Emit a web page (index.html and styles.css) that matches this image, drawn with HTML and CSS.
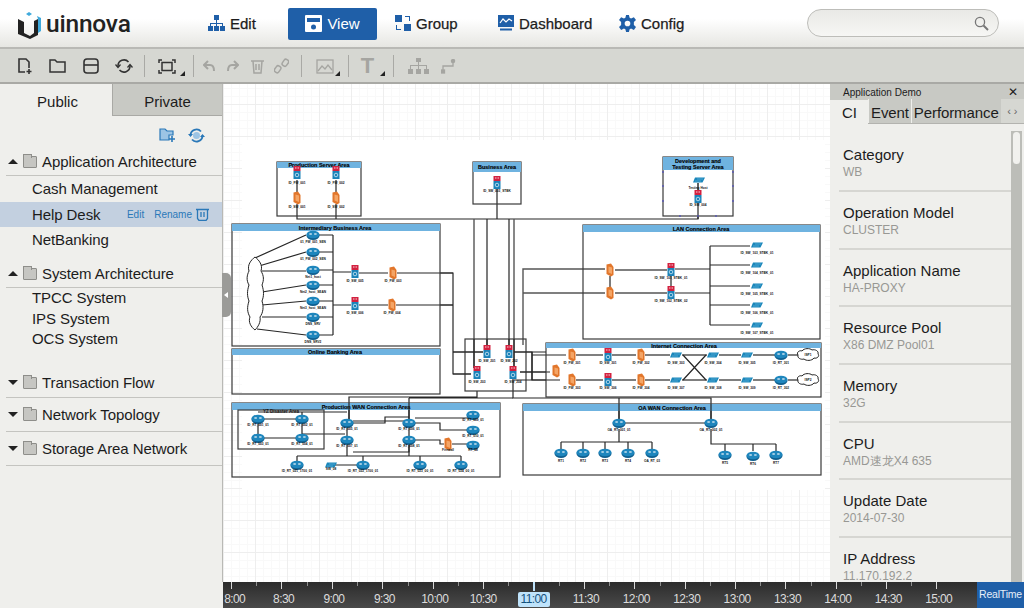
FILE: index.html
```html
<!DOCTYPE html>
<html lang="en">
<head>
    <meta charset="UTF-8">
    <meta name="viewport" content="width=device-width, initial-scale=1.0">
    <title>uinnova - Application Demo</title>
    <link rel="stylesheet" href="styles.css">
</head>
<body>
    <header class="topbar">
        <div class="logo">
            <svg width="26" height="28" viewBox="0 0 26 28">
                <path d="M1 8 L7 11 V22 L13 25 L17 22 V10 L21 8 V24 L13 28 L1 23 Z" fill="#222"/>
                <path d="M9 3 L12 1 L15 3 L12 5 Z" fill="#3fa9dc"/>
                <path d="M20 5 L24 7 V20 L21 22 V8 Z" fill="#3fa9dc"/>
            </svg>
            <span>uinnova</span>
        </div>
        <nav class="nav">
            <a class="nav-item nav-edit">
                <svg width="17" height="16" viewBox="0 0 17 16" fill="#1f5fa8">
                    <rect x="6" y="0" width="5" height="5"/><rect x="0" y="11" width="5" height="5"/><rect x="6" y="11" width="5" height="5"/><rect x="12" y="11" width="5" height="5"/>
                    <path d="M8 5h1v3h6v3h-1V9H9v2H8V9H3v2H2V8h6z"/>
                </svg>
                Edit
            </a>
            <a class="nav-item nav-view active">
                <svg width="17" height="17" viewBox="0 0 17 17">
                    <rect width="17" height="17" rx="1" fill="#fff"/>
                    <rect x="2" y="3" width="13" height="4" fill="#1f5fa8"/>
                    <circle cx="8.5" cy="12" r="2.5" fill="#1f5fa8"/>
                </svg>
                View
            </a>
            <a class="nav-item nav-group">
                <svg width="16" height="16" viewBox="0 0 16 16" fill="#1f5fa8">
                    <rect x="0" y="0" width="7" height="7"/><rect x="9" y="9" width="7" height="7"/>
                    <path d="M10 1h5v5h-1V2h-4zM1 10h1v4h4v1H1z"/>
                </svg>
                Group
            </a>
            <a class="nav-item nav-dash">
                <svg width="16" height="16" viewBox="0 0 16 16">
                    <rect width="16" height="12" fill="#1f5fa8"/>
                    <path d="M2 8 L5 4 L8 7 L11 4 L14 6" fill="none" stroke="#fff" stroke-width="1.2"/>
                    <rect x="2" y="13.5" width="12" height="2" fill="#1f5fa8"/>
                </svg>
                Dashboard
            </a>
            <a class="nav-item nav-config">
                <svg width="17" height="17" viewBox="0 0 24 24" fill="#1f5fa8">
                    <path fill-rule="evenodd" d="M10 0h4l1 4 2 1 4-2 3 4-3 3v4l3 3-3 4-4-2-2 1-1 4h-4l-1-4-2-1-4 2-3-4 3-3v-4L0 7l3-4 4 2 2-1zM12 8a4 4 0 1 0 0 8 4 4 0 0 0 0-8z"/>
                </svg>
                Config
            </a>
        </nav>
        <div class="search">
            <svg width="15" height="15" viewBox="0 0 15 15" fill="none" stroke="#777" stroke-width="1.3">
                <circle cx="6" cy="6" r="4.6"/><path d="M9.5 9.5L14 14" stroke-width="2"/>
            </svg>
        </div>
    </header>

    <div class="toolbar">
        <div class="tb-group tb-file">
            <span class="tb-btn"><svg width="16" height="17" viewBox="0 0 16 17" fill="none" stroke="#333" stroke-width="1.6"><path d="M8 14H2V1h7l3 3v6"/><path d="M12 11v5M9.5 13.5h5"/></svg></span>
            <span class="tb-btn"><svg width="17" height="14" viewBox="0 0 17 14" fill="none" stroke="#333" stroke-width="1.5"><path d="M1 1h5l2 2h8v10H1z"/></svg></span>
            <span class="tb-btn"><svg width="16" height="16" viewBox="0 0 16 16" fill="none" stroke="#333" stroke-width="1.6"><rect x="1" y="1" width="14" height="14" rx="3"/><path d="M1 7h14"/></svg></span>
            <span class="tb-btn"><svg width="18" height="16" viewBox="0 0 18 16" fill="none" stroke="#333" stroke-width="1.6"><path d="M3 8a6 6 0 0 1 10.5-4M15 8a6 6 0 0 1-10.5 4"/><path d="M0.5 6.500l2.500 3 2.500-3M12.500 9.500l2.500-3 2.500 3" stroke-width="1.300"/></svg></span>
        </div>
        <i class="tb-sep"></i>
        <div class="tb-group tb-fit">
            <span class="tb-btn tb-more"><svg width="18" height="15" viewBox="0 0 18 15" fill="none" stroke="#333" stroke-width="1.500"><rect x="4" y="3.500" width="10" height="8"/><path d="M1 4V1h3M14 1h3v3M17 11v3h-3M4 14H1v-3"/></svg></span>
        </div>
        <i class="tb-sep"></i>
        <div class="tb-group tb-edit">
            <span class="tb-btn"><svg width="12" height="12" viewBox="0 0 12 12" fill="none" stroke="#a5a5a1" stroke-width="2"><path d="M5 1L1 5l4 4M1 5h6c3 0 4 2 4 6"/></svg></span>
            <span class="tb-btn"><svg width="12" height="12" viewBox="0 0 12 12" fill="none" stroke="#a5a5a1" stroke-width="2"><path d="M7 1l4 4-4 4M11 5H5C2 5 1 7 1 11"/></svg></span>
            <span class="tb-btn"><svg width="13" height="15" viewBox="0 0 13 15" fill="none" stroke="#a5a5a1" stroke-width="1.500"><path d="M0 2h13M2 2l1 12h7l1-12M5 5v6M8 5v6"/></svg></span>
            <span class="tb-btn"><svg width="15" height="16" viewBox="0 0 15 16" fill="none" stroke="#a5a5a1" stroke-width="1.500"><rect x="-2.500" y="-2" width="5" height="7" rx="2" transform="translate(4.500 10) rotate(35)"/><rect x="-2.500" y="-5" width="5" height="7" rx="2" transform="translate(10.500 6) rotate(35)"/></svg></span>
        </div>
        <i class="tb-sep"></i>
        <div class="tb-group tb-image">
            <span class="tb-btn tb-more"><svg width="18" height="15" viewBox="0 0 18 15" fill="none" stroke="#a5a5a1" stroke-width="1.300"><rect x="1" y="1" width="16" height="13"/><path d="M2 12l4-5 3 3 3-4 4 5"/></svg></span>
        </div>
        <i class="tb-sep"></i>
        <div class="tb-group tb-text">
            <span class="tb-btn tb-more tb-t">T</span>
        </div>
        <i class="tb-sep"></i>
        <div class="tb-group tb-tree">
            <span class="tb-btn"><svg width="21" height="16" viewBox="0 0 21 16" fill="#a5a5a1"><rect x="8" y="0" width="5" height="4"/><rect x="0" y="11" width="5" height="5"/><rect x="8" y="11" width="5" height="5"/><rect x="16" y="11" width="5" height="5"/><path d="M10 4h1v3h8v4h-1V8h-7v3h-1V8H3v3H2V7h8z"/></svg></span>
            <span class="tb-btn"><svg width="15" height="15" viewBox="0 0 15 15" fill="none" stroke="#a5a5a1" stroke-width="1.300"><path d="M2 11V7h10V3"/><rect x="0.500" y="11" width="3" height="3" fill="#a5a5a1"/><circle cx="12" cy="2" r="1.600" fill="#a5a5a1"/></svg></span>
        </div>
    </div>

    <main class="main">
        <aside class="sidebar">
            <div class="tabs">
                <div class="tab active">Public</div>
                <div class="tab">Private</div>
            </div>
            <div class="side-tools">
                <svg width="17" height="14" viewBox="0 0 17 14" fill="#9cc4e4" stroke="#2a78b8" stroke-width="1.200"><path d="M1 1h5l2 2h6v4H10v5H1z"/><path d="M13 8v6M10 11h6" fill="none" stroke-width="1.600"/></svg>
                <svg width="17" height="15" viewBox="0 0 17 15" fill="none" stroke="#2a78b8" stroke-width="1.800"><path d="M2.500 7.500a6 6 0 0 1 10.500-4M14.500 7.500a6 6 0 0 1-10.500 4"/><circle cx="8.500" cy="7.500" r="3.500" fill="#9cc4e4" stroke="none"/><path d="M0 6h5L2.500 9zM12 9h5l-2.500-3z" fill="#2a78b8" stroke="none"/></svg>
            </div>

            <div class="tree-head open">
                <i class="caret"></i><i class="folder"></i>Application Architecture
            </div>
            <div class="tree-list">
                <div class="tree-item">Cash Management</div>
                <div class="tree-item selected">
                    Help Desk
                    <span class="item-actions">
                        <a>Edit</a><a>Rename</a>
                        <svg width="13" height="13" viewBox="0 0 13 13" fill="none" stroke="#2a78b8" stroke-width="1.300"><path d="M0 1.500h13M1.500 1.500v9l1.500 2h7l1.500-2v-9M5 4v5M8 4v5"/></svg>
                    </span>
                </div>
                <div class="tree-item">NetBanking</div>
            </div>

            <div class="tree-head open head-system">
                <i class="caret"></i><i class="folder"></i>System Architecture
            </div>
            <div class="tree-list compact">
                <div class="tree-item">TPCC System</div>
                <div class="tree-item">IPS System</div>
                <div class="tree-item">OCS System</div>
            </div>

            <div class="tree-head head-closed head-first">
                <i class="caret"></i><i class="folder"></i>Transaction Flow
            </div>
            <div class="tree-head head-closed">
                <i class="caret"></i><i class="folder"></i>Network Topology
            </div>
            <div class="tree-head head-closed">
                <i class="caret"></i><i class="folder"></i>Storage Area Network
            </div>
        </aside>

        <section class="center">
            <div class="canvas">
                <div class="collapse-handle"></div>
                <svg class="diagram" viewBox="223 84 607 498" width="607" height="498">
                    <defs>
                        <g id="router">
                            <ellipse cx="0" cy="0.800" rx="6.500" ry="4.200" fill="#0f5f8f"/>
                            <ellipse cx="0" cy="-0.500" rx="6.500" ry="3.800" fill="#1e86bd"/>
                            <path d="M-4-1h2.500M-1.500-1l-1-1M-1.500-1l-1 1M4-1H1.500M1.500-1l1-1M1.500-1l1 1" stroke="#fff" stroke-width=".7" fill="none"/>
                        </g>
                        <g id="server">
                            <rect x="-3.500" y="-7" width="7" height="5" fill="#d3213f"/>
                            <rect x="-3.500" y="-2" width="7" height="8" fill="#1b82b8"/>
                            <circle cx="0" cy="2" r="1.800" fill="none" stroke="#cfe8f5" stroke-width=".8"/>
                            <path d="M-2-5h1.500M.5-5H2" stroke="#fff" stroke-width=".8"/>
                        </g>
                        <g id="firewall">
                            <path d="M-3.500-5.500L1-6.500L3.500-3V5L1 6.500L-3.500 4Z" fill="#e2762b"/>
                            <path d="M-1.500-3.500L2-2.500V4L-1.500 2.500Z" fill="#f4a566"/>
                        </g>
                        <g id="switch">
                            <path d="M-4-2.500H6L3.500 2.500H-6Z" fill="#1b87bb"/>
                            <path d="M-2-1H4M-4 1H2" stroke="#7cc6e8" stroke-width=".5"/>
                        </g>
                        <g id="cloud">
                            <path d="M-10 0c-2-3 2-5 4-4 2-3 8-3 10-1 3-1 7 1 6 4 2 2-1 5-4 4-2 3-8 3-10 1-3 1-7-1-6-4z" fill="#fff" stroke="#222" stroke-width="1"/>
                        </g>
                    </defs>

                    <rect class="paper" x="242" y="140" width="583" height="350"/>

                    <!-- links -->
                    <g class="links">
                        <path d="M297 216V219H698V216M336 216V219M497 204V219"/>
                        <path class="soft" d="M474 219V368M514 219V368"/>
                        <path d="M487 219V346M509 219V346"/>
                        <path d="M297 180V192M336 180V192M297 204V216M336 204V216M497 188V204M698 183V216"/>
                        <path d="M440 273H453V374H471M440 305H453M453 352H483"/>
                        <path d="M359 273H388M397 273H453M359 305H388M396 305H453M333 272H351M333 305H351"/>
                        <path d="M333 235V335M313 235H333M313 252H333M313 270H333M313 285H333M313 301H333M313 317H333M313 335H333"/>
                        <path d="M255 258L306 235M259 266L306 252M262 271H306M262 292L306 285M262 305L306 301M262 317H306M257 329L306 335"/>
                        <path class="soft" d="M523 345V269H605M523 293H605M615 270H667M615 293H667"/>
                        <path d="M610 276V287M671 276V287"/>
                        <path d="M675 269H710M675 293H710M710 246V325M710 246H750M710 265H750M710 286H750M710 305H750M710 325H750"/>
                        <path d="M514 352H532V380H560M532 355H566M520 372H550"/>
                        <path class="soft" d="M576 355H603M612 355H636M645 355H670M682 355H707M719 355H741M753 355H775M788 355H800"/>
                        <path class="soft" d="M576 380H603M612 380H636M645 380H670M682 380H707M719 380H741M753 380H775M788 380H800"/>
                        <path d="M683 355L706 380M683 380L706 355"/>
                        <path d="M513 379V398H711V423M619 398V423M619 423H711"/>
                        <path d="M619 429V442M561 442H652M561 442V449M583 442V449M605 442V449M628 442V449M652 442V449"/>
                        <path d="M711 429V444H776M725 444V451M753 444V451M776 444V451"/>
                        <path d="M477 391V397H349V423M409 398H513M409 398V423"/>
                        <path d="M258 419V438M302 419V438M258 438H302M258 412H347M302 412V419M347 428V440M409 428V440"/>
                        <path d="M258 419H302M302 434H345M353 423H385V417H409M353 421H409M415 423H440V430H473M415 418H473"/>
                        <path d="M415 440H440V444H444M452 444H473M353 452H409V445"/>
                        <path d="M297 456H461M297 456V461M363 456V461M420 456V461M461 456V461M347 445V456M409 445V456M331 465H357"/>
                    </g>
                    <path class="link-thin" d="M698 183V197"/>

                    <!-- areas -->
                    <g class="area"><rect x="277" y="162" width="84" height="54"/><rect class="bar" x="277" y="162" width="84" height="6"/><text x="319" y="167">Production Server Area</text></g>
                    <g class="area"><rect x="473" y="162" width="48" height="42"/><rect class="bar" x="473" y="162" width="48" height="10"/><text x="497" y="168.500">Business Area</text></g>
                    <g class="area"><rect x="663" y="157" width="70" height="59"/><rect class="bar" x="663" y="157" width="70" height="13"/><text x="698" y="163">Development and</text><text x="698" y="168.500">Testing Server Area</text></g>
                    <g class="area"><rect x="232" y="224" width="208" height="122"/><rect class="bar" x="232" y="224" width="208" height="7"/><text x="335" y="229.500">Intermediary Business Area</text></g>
                    <g class="area"><rect x="583" y="225" width="237" height="114"/><rect class="bar" x="583" y="225" width="237" height="7"/><text x="701" y="230.500">LAN Connection Area</text></g>
                    <g class="area"><rect x="232" y="349" width="208" height="45"/><rect class="bar" x="232" y="349" width="208" height="6"/><text x="335" y="354">Online Banking Area</text></g>
                    <g class="area"><rect x="232" y="403" width="268" height="74"/><rect class="bar" x="232" y="403" width="268" height="7"/><text x="366" y="408.500">Production WAN Connection Area</text></g>
                    <g class="area"><rect x="546" y="343" width="275" height="54"/><rect class="bar" x="546" y="343" width="275" height="5"/><text x="684" y="347.500">Internet Connection Area</text></g>
                    <g class="area"><rect x="523" y="404" width="298" height="71"/><rect class="bar" x="523" y="404" width="298" height="7"/><text x="672" y="409.500">OA WAN Connection Area</text></g>
                    <rect class="box" x="465" y="339" width="61" height="52"/>
                    <rect class="box" x="238" y="410" width="86" height="39"/>
                    <text class="sub-title" x="281" y="413">YZ Disaster Area</text>

                    <!-- overlay the links that cross the area borders -->
                    <path class="links" d="M474 339V368M487 339V346M509 339V346M514 339V368M453 352H483M453 374H471M514 352H546M520 372H546M514 380H546M532 352V380"/>
                    <path class="links" d="M349 403V423M409 403V423M619 404V423M711 404V423M698 216V219"/>

                    <!-- production servers -->
                    <use href="#server" x="297" y="173"/><use href="#server" x="336" y="173"/><use href="#server" x="497" y="183"/>
                    <use href="#firewall" x="297" y="198"/><use href="#firewall" x="336" y="198"/>
                    <use href="#switch" x="699" y="180"/><use href="#server" x="698" y="197"/>

                    <!-- intermediary -->
                    <path class="cloud-tall" d="M255 257c4 3 8 8 6 14 3 5 3 9 1 14 2 6 2 11 0 16 2 6 1 12-2 16 1 5-2 10-5 13-4-3-7-8-5-13-3-5-3-10-1-16-2-5-2-10 0-16-3-5-2-10 0-14-2-6 2-11 6-14z"/>
                    <use href="#router" x="313" y="235"/><use href="#router" x="313" y="252"/><use href="#router" x="313" y="270"/><use href="#router" x="313" y="285"/><use href="#router" x="313" y="301"/><use href="#router" x="313" y="317"/><use href="#router" x="313" y="335"/>
                    <use href="#server" x="355" y="272"/><use href="#server" x="355" y="304"/>
                    <use href="#firewall" x="393" y="273"/><use href="#firewall" x="392" y="305"/>

                    <!-- lan -->
                    <use href="#firewall" x="610" y="270"/><use href="#firewall" x="610" y="293"/>
                    <use href="#server" x="671" y="270"/><use href="#server" x="671" y="293"/>
                    <use href="#switch" x="757" y="245"/><use href="#switch" x="757" y="265"/><use href="#switch" x="757" y="286"/><use href="#switch" x="757" y="305"/><use href="#switch" x="757" y="325"/>

                    <!-- core -->
                    <use href="#server" x="487" y="352"/><use href="#server" x="509" y="352"/><use href="#server" x="477" y="373"/><use href="#server" x="513" y="373"/>

                    <!-- internet -->
                    <use href="#firewall" x="572" y="355"/><use href="#server" x="608" y="355"/><use href="#firewall" x="641" y="355"/><use href="#switch" x="676" y="355"/><use href="#switch" x="713" y="355"/><use href="#switch" x="747" y="355"/><use href="#router" x="781" y="355"/><use href="#cloud" x="808" y="355"/>
                    <use href="#firewall" x="572" y="380"/><use href="#server" x="608" y="380"/><use href="#firewall" x="641" y="380"/><use href="#switch" x="676" y="380"/><use href="#switch" x="713" y="380"/><use href="#switch" x="747" y="380"/><use href="#router" x="781" y="380"/><use href="#cloud" x="808" y="380"/>
                    <use href="#firewall" x="556" y="371"/>

                    <!-- oa wan -->
                    <use href="#router" x="619" y="423"/><use href="#router" x="711" y="423"/>
                    <use href="#router" x="561" y="453"/><use href="#router" x="583" y="453"/><use href="#router" x="605" y="453"/><use href="#router" x="628" y="453"/><use href="#router" x="652" y="453"/>
                    <use href="#router" x="725" y="455"/><use href="#router" x="753" y="456"/><use href="#router" x="776" y="455"/>

                    <!-- production wan -->
                    <use href="#router" x="258" y="419"/><use href="#router" x="302" y="419"/><use href="#router" x="258" y="438"/><use href="#router" x="302" y="438"/>
                    <use href="#router" x="347" y="423"/><use href="#router" x="409" y="423"/><use href="#router" x="347" y="440"/><use href="#router" x="409" y="440"/>
                    <use href="#router" x="473" y="415"/><use href="#router" x="473" y="430"/><use href="#router" x="473" y="445"/>
                    <use href="#firewall" x="448" y="444"/>
                    <use href="#router" x="297" y="465"/><use href="#router" x="363" y="465"/><use href="#router" x="420" y="465"/><use href="#router" x="461" y="465"/>
                    <use href="#switch" x="331" y="465"/>

                    <!-- selection handles -->
                    <g class="handles">
                        <circle cx="663" cy="172" r="1"/><circle cx="663" cy="186" r="1"/><circle cx="663" cy="201" r="1"/>
                        <circle cx="733" cy="172" r="1"/><circle cx="733" cy="186" r="1"/><circle cx="733" cy="201" r="1"/>
                        <circle cx="680" cy="216" r="1"/><circle cx="698" cy="216" r="1"/><circle cx="716" cy="216" r="1"/>
                    </g>

                    <!-- node labels -->
                    <g class="labels">
                        <text x="297" y="184">ID_FW_001</text><text x="336" y="184">ID_FW_002</text>
                        <text x="297" y="208">ID_SW_001</text><text x="336" y="208">ID_SW_002</text>
                        <text x="497" y="192">ID_SW_003_STBK</text>
                        <text x="698" y="189">Testing Host</text><text x="698" y="206">ID_SW_004</text>
                        <text x="313" y="243">01_FW_001_SEN</text><text x="313" y="260">01_FW_002_SEN</text><text x="313" y="278">Net1_host</text><text x="313" y="293">Net2_host_SEAN</text><text x="313" y="309">Net3_host_SEAN</text><text x="313" y="325">DNS_SRV</text><text x="313" y="343">DNS_SRV2</text>
                        <text x="355" y="282">ID_SW_005</text><text x="355" y="314">ID_SW_006</text>
                        <text x="393" y="282">ID_FW_003</text><text x="392" y="314">ID_FW_004</text>
                        <text x="671" y="279">ID_SW_101_STBK_01</text><text x="671" y="302">ID_SW_102_STBK_02</text>
                        <text x="757" y="254">ID_SW_103_STBK_01</text><text x="757" y="274">ID_SW_104_STBK_01</text><text x="757" y="295">ID_SW_105_STBK_01</text><text x="757" y="314">ID_SW_106_STBK_01</text><text x="757" y="334">ID_SW_107_STBK_01</text>
                        <text x="487" y="362">ID_SW_201</text><text x="509" y="362">ID_SW_202</text><text x="477" y="383">ID_SW_203</text><text x="513" y="383">ID_SW_204</text>
                        <text x="572" y="364">ID_FW_301</text><text x="608" y="364">ID_SW_301</text><text x="641" y="364">ID_FW_302</text><text x="676" y="364">ID_SW_303</text><text x="713" y="364">ID_SW_304</text><text x="747" y="364">ID_SW_305</text><text x="781" y="364">ID_RT_301</text>
                        <text x="572" y="389">ID_FW_303</text><text x="608" y="389">ID_SW_306</text><text x="641" y="389">ID_FW_304</text><text x="676" y="389">ID_SW_307</text><text x="713" y="389">ID_SW_308</text><text x="747" y="389">ID_SW_309</text><text x="781" y="389">ID_RT_302</text>
                        <text x="808" y="356">ISP1</text><text x="808" y="381">ISP2</text>
                        <text x="619" y="431">OA_RT_001_01</text><text x="711" y="431">OA_RT_002_01</text>
                        <text x="561" y="462">RT1</text><text x="583" y="462">RT2</text><text x="605" y="462">RT3</text><text x="628" y="462">RT4</text><text x="652" y="462">OA_RT_03</text>
                        <text x="725" y="464">RT5</text><text x="753" y="465">RT6</text><text x="776" y="464">RT7</text>
                        <text x="258" y="426">ID_RT_001_01</text><text x="302" y="426">ID_RT_002_01</text><text x="258" y="445">ID_RT_003_01</text><text x="302" y="445">ID_RT_004_01</text>
                        <text x="347" y="430">ID_RT_005_01</text><text x="409" y="430">ID_RT_006_01</text><text x="347" y="447">ID_RT_007_01</text><text x="409" y="447">ID_RT_008_01</text>
                        <text x="473" y="421">ID_RT_009_01</text><text x="473" y="437">ID_RT_010_01</text><text x="473" y="451">RT_08</text><text x="448" y="451">Firewall</text>
                        <text x="297" y="472">ID_RT_021_1700_01</text><text x="331" y="470">SW_08</text><text x="363" y="472">ID_RT_022_1700_01</text><text x="420" y="472">ID_RT_023_00_01</text><text x="461" y="472">ID_RT_024_00_01</text>
                    </g>
                </svg>
            </div>
        </section>

        <aside class="details">
            <div class="details-head">Application Demo<span class="details-close">&#10005;</span></div>
            <div class="details-tabs">
                <div class="dtab active">CI</div>
                <div class="dtab">Event</div>
                <div class="dtab">Performance</div>
                <div class="dtab-arrows">&#8249; &#8250;</div>
            </div>
            <div class="details-body">
                <div class="props">
                    <div class="prop"><b>Category</b><span>WB</span></div>
                    <div class="prop"><b>Operation Model</b><span>CLUSTER</span></div>
                    <div class="prop"><b>Application Name</b><span>HA-PROXY</span></div>
                    <div class="prop"><b>Resource Pool</b><span>X86 DMZ Pool01</span></div>
                    <div class="prop"><b>Memory</b><span>32G</span></div>
                    <div class="prop"><b>CPU</b><span>AMD速龙X4 635</span></div>
                    <div class="prop"><b>Update Date</b><span>2014-07-30</span></div>
                    <div class="prop"><b>IP Address</b><span>11.170.192.2</span></div>
                </div>
                <div class="scroll"><div class="scroll-thumb"></div></div>
            </div>
        </aside>
    </main>

    <footer class="timeline">
        <div class="hours">
            <div class="hour first">8:00</div>
            <div class="hour">8:30</div>
            <div class="hour">9:00</div>
            <div class="hour">9:30</div>
            <div class="hour">10:00</div>
            <div class="hour tight">10:30</div>
            <div class="hour tight current"><span>11:00</span></div>
            <div class="hour">11:30</div>
            <div class="hour">12:00</div>
            <div class="hour">12:30</div>
            <div class="hour">13:00</div>
            <div class="hour">13:30</div>
            <div class="hour">14:00</div>
            <div class="hour">14:30</div>
            <div class="hour">15:00</div>
        </div>
        <div class="realtime">RealTime</div>
    </footer>
</body>
</html>
```

FILE: styles.css
```css
/* Reset some default styles */
* {
    margin: 0;
    padding: 0;
    box-sizing: border-box;
}

html, body {
    width: 1024px;
    height: 608px;
    overflow: hidden;
}

body {
    font-family: "Liberation Sans", Arial, sans-serif;
    color: #1c1c1c;
    background-color: #efefec;
    display: flex;
    flex-direction: column;
}

svg {
    flex: none;
}

/* top bar */
.topbar {
    height: 49px;
    display: flex;
    align-items: center;
    background: linear-gradient(#ffffff 40%, #e6e6e2);
    border-bottom: 2px solid #b9b9b5;
}

.logo {
    width: 208px;
    padding-left: 17px;
    display: flex;
    align-items: center;
    gap: 3px;
}

.logo svg {
    margin-top: 2px;
}

.logo span {
    font-family: Roboto, sans-serif;
    font-size: 24.500px;
    font-weight: 500;
    letter-spacing: -0.2px;
    color: #222;
}

.nav {
    display: flex;
    align-items: center;
}

.nav-item {
    display: flex;
    align-items: center;
    gap: 5px;
    height: 32px;
    padding-bottom: 1px;
    font-size: 15px;
    -webkit-text-stroke: 0.25px #1c1c1c;
}

.nav-item.active {
    justify-content: center;
    background-color: #1f5fa8;
    border-radius: 2px;
    color: #fff;
    -webkit-text-stroke: 0;
}

.nav-edit { width: 80px; }
.nav-view { width: 89px; margin-right: 18px; }
.nav-group { width: 103px; }
.nav-dash { width: 121px; }
.nav-config { width: 68px; }

.search {
    width: 192px;
    height: 28px;
    margin: -1px 25px 0 auto;
    border: 1px solid #bdbdb9;
    border-radius: 14px;
    background: linear-gradient(#e9e9e6, #f6f6f4);
    display: flex;
    align-items: center;
    justify-content: flex-end;
    padding-right: 9px;
}

/* tool bar */
.toolbar {
    height: 35px;
    padding-top: 1px;
    display: flex;
    align-items: center;
    background-color: #d6d7d2;
    border-bottom: 2px solid #a9a9a5;
}

.tb-group {
    display: flex;
    align-items: center;
}

.tb-btn {
    position: relative;
    display: flex;
    align-items: center;
    justify-content: center;
    height: 24px;
}

.tb-more::after {
    content: "";
    position: absolute;
    right: 1px;
    bottom: 2px;
    border-left: 5px solid transparent;
    border-bottom: 5px solid #222;
}

.tb-sep {
    width: 1px;
    height: 22px;
    background-color: #a9a9a5;
}

.tb-file { padding: 0 4px 0 8px; }
.tb-file .tb-btn { width: 33px; }
.tb-fit { padding: 0 7px 0 3px; }
.tb-fit .tb-btn { width: 38px; }
.tb-edit { padding: 0 8px 0 3px; }
.tb-edit .tb-btn { width: 24px; }
.tb-image { padding: 0 7px 0 6px; }
.tb-image .tb-btn { width: 33px; }
.tb-text { padding: 0 7px 0 6px; }
.tb-text .tb-btn { width: 31px; }
.tb-tree { padding-left: 9px; }
.tb-tree .tb-btn { width: 30px; }

.tb-t {
    font-size: 22px;
    font-weight: bold;
    color: #a5a5a1;
    padding-right: 6px;
}

/* main area */
.main {
    flex: 1;
    min-height: 0;
    display: flex;
}

.sidebar {
    width: 223px;
    background-color: #efefec;
    border-right: 1px solid #b9b9b5;
}

.tabs {
    display: flex;
    height: 32px;
}

.tab {
    flex: 1;
    text-align: center;
    font-size: 15px;
    line-height: 36px;
    background-color: #c8c9c4;
    border-bottom: 1px solid #a9a9a5;
    border-left: 1px solid #a9a9a5;
}

.tab.active {
    background-color: #efefec;
    border: none;
    padding-left: 3px;
}

.side-tools {
    height: 32px;
    display: flex;
    align-items: center;
    justify-content: flex-end;
    gap: 12px;
    padding: 6px 17px 0 0;
}

.tree-head {
    display: flex;
    align-items: center;
    height: 28px;
    margin-left: 6px;
    padding-left: 2px;
    font-size: 15px;
    letter-spacing: -0.08px;
    border-bottom: 1px solid #c4c4c0;
}

.caret {
    width: 0;
    height: 0;
    border-left: 5px solid transparent;
    border-right: 5px solid transparent;
    border-top: 5px solid #222;
    margin-right: 5px;
}

.tree-head.open .caret {
    border-top: none;
    border-bottom: 5px solid #222;
}

.folder {
    position: relative;
    width: 14px;
    height: 12px;
    margin: 1px 5px 0 0;
    background-color: #c6c6c2;
    border: 1px solid #8e8e8a;
    border-radius: 1px;
}

.folder::before {
    content: "";
    position: absolute;
    top: -3px;
    left: -1px;
    width: 7px;
    height: 3px;
    background-color: #c6c6c2;
    border: 1px solid #8e8e8a;
    border-bottom: none;
}

.tree-item {
    display: flex;
    align-items: center;
    height: 25.500px;
    padding-left: 32px;
    font-size: 15px;
    letter-spacing: -0.08px;
}

.tree-item.selected {
    background-color: #c3d0e0;
    justify-content: space-between;
    padding-right: 13px;
}

.item-actions {
    display: flex;
    align-items: center;
    gap: 10px;
    font-size: 10px;
    letter-spacing: 0;
    color: #2a78b8;
}

.item-actions svg {
    margin-left: -6px;
}

.head-system {
    margin-top: 7px;
}

.compact .tree-item {
    height: 20.400px;
}

.head-first {
    margin-top: 20px;
}

.head-closed {
    height: 34px;
}

.head-first.head-closed {
    height: 29px;
}

/* canvas */
.center {
    width: 607px;
    position: relative;
}

.canvas {
    height: 100%;
    background-color: #fff;
    background-image:
        linear-gradient(#eeeeee 1px, transparent 1px),
        linear-gradient(90deg, #eeeeee 1px, transparent 1px),
        linear-gradient(#f9f9f9 1px, transparent 1px),
        linear-gradient(90deg, #f9f9f9 1px, transparent 1px);
    background-size: 32px 32px, 32px 32px, 8px 8px, 8px 8px;
    background-position: -1px -12px, 0 -12px, 0 -4px, 0 0;
}

.collapse-handle {
    position: absolute;
    left: -1px;
    top: 189px;
    width: 9px;
    height: 44px;
    background-color: #9b9b98;
    border-radius: 0 5px 5px 0;
}

.collapse-handle::after {
    content: "";
    position: absolute;
    left: 2px;
    top: 19px;
    border-top: 3px solid transparent;
    border-bottom: 3px solid transparent;
    border-right: 4px solid #fff;
}

.diagram {
    display: block;
}

.paper {
    fill: #fff;
}

.links path, path.links {
    fill: none;
    stroke: #262626;
    stroke-width: 1.200;
}

.links path.soft {
    stroke: #555;
    stroke-width: 1.400;
}

.link-thin {
    fill: none;
    stroke: #222;
    stroke-width: 0.6;
}

.area rect {
    fill: none;
    stroke: #3a3a3a;
    stroke-width: 1.200;
}

.area .bar {
    fill: #6fb3e0;
    stroke: none;
}

.area text {
    font-size: 5.500px;
    font-weight: bold;
    text-anchor: middle;
    fill: #000;
    stroke: #000;
    stroke-width: 0.15;
}

.box {
    fill: none;
    stroke: #3a3a3a;
    stroke-width: 1.200;
}

.sub-title {
    font-size: 4.500px;
    font-weight: bold;
    text-anchor: middle;
    fill: #111;
}

.cloud-tall {
    fill: #fff;
    stroke: #222;
    stroke-width: 1;
}

.handles circle {
    fill: #5a5ab0;
}

.labels text {
    font-size: 3.200px;
    font-weight: bold;
    text-anchor: middle;
    fill: #111;
}

/* right panel */
.details {
    width: 194px;
    display: flex;
    flex-direction: column;
    background-color: #efefec;
}

.details-head {
    height: 15px;
    display: flex;
    align-items: center;
    justify-content: space-between;
    padding: 1px 6px 0 13px;
    font-size: 10px;
    background-color: #c8c9c4;
}

.details-close {
    font-size: 12px;
}

.details-tabs {
    height: 25px;
    display: flex;
    align-items: center;
    background-color: #c8c9c4;
    border-bottom: 1px solid #b3b3af;
    font-size: 15px;
    letter-spacing: -0.1px;
}

.dtab {
    height: 100%;
    display: flex;
    align-items: center;
    padding: 2px 2px 0;
    border-left: 1px solid #efefec;
}

.dtab.active {
    width: 38px;
    padding-left: 12px;
    background-color: #efefec;
    border-left: none;
    margin-bottom: -1px;
}

.dtab-arrows {
    flex: 1;
    height: 100%;
    display: flex;
    align-items: center;
    justify-content: center;
    font-size: 11px;
    color: #666;
    background-color: #d6d7d2;
}

.details-body {
    flex: 1;
    min-height: 0;
    display: flex;
    overflow: hidden;
    padding: 8px 2px 0 9px;
}

.props {
    flex: 1;
}

.prop {
    height: 57.700px;
    padding: 12px 0 0 4px;
    border-bottom: 2px solid #d6d6d2;
    display: flex;
    flex-direction: column;
}

.prop:first-child {
    height: 60px;
    padding-top: 14px;
}

.prop:last-child {
    height: 48px;
    border-bottom: none;
}

.prop b {
    font-weight: normal;
    font-size: 15px;
    line-height: 17px;
}

.prop span {
    font-size: 12px;
    line-height: 19px;
    color: #989894;
}

.scroll {
    width: 11px;
    margin-top: -1px;
    background-color: #bcbdb8;
    padding: 1px 2px;
}

.scroll-thumb {
    height: 32px;
    background-color: #f1f1ee;
    border-radius: 4px;
}

/* time line */
.timeline {
    height: 26px;
    margin-left: 223px;
    display: flex;
    background: linear-gradient(#2c2c2c, #4a4a4a);
    color: #dcdcdc;
    overflow: hidden;
}

.hours {
    flex: 1;
    display: flex;
    margin-left: -17px;
    min-width: 0;
}

.hour {
    position: relative;
    flex: 0 0 50.400px;
    padding: 10px 0 0 4px;
    text-align: center;
    font-size: 12px;
    letter-spacing: -0.6px;
}

.hour.first {
    padding-left: 7px;
}

.hour.tight {
    padding-left: 0;
}

.hour::before {
    content: "";
    position: absolute;
    left: 25px;
    top: 0;
    width: 1px;
    height: 7px;
    background-color: #d8d8d8;
}

.hour::after {
    content: "";
    position: absolute;
    left: 0;
    top: 0;
    width: 1px;
    height: 4px;
    background-color: #8f8f8f;
}

.hour.current::before {
    width: 2px;
    height: 9px;
    background-color: #bfe3fb;
}

.hour.current span {
    display: inline-block;
    width: 32px;
    line-height: 15px;
    background-color: #bfe3fb;
    color: #14527f;
    border-radius: 2px;
}

.realtime {
    width: 47px;
    flex: none;
    text-align: center;
    font-size: 10.500px;
    letter-spacing: -0.2px;
    line-height: 24px;
    color: #e6eef8;
    background-color: #1f5fa8;
}
```
